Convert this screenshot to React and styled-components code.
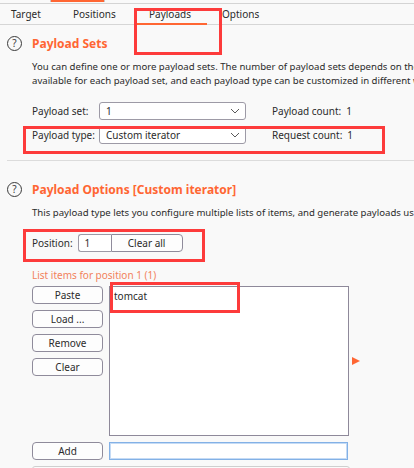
import React from "react";
import styled, { createGlobalStyle } from "styled-components";

const Global = createGlobalStyle`
  body {
    margin: 0;
    background: #f9f9f9;
    font-family: "Noto Sans", "Open Sans", sans-serif;
    color: #2b2b2b;
  }
`;

const Page = styled.div`
  position: relative;
  width: 414px;
  height: 468px;
  overflow: hidden;
  background: #f9f9f9;
  font-size: 10px;
`;

const TopStrip = styled.div`
  height: 3px;
  border-bottom: 1px solid #d4d4d4;
  display: flex;
`;

const PrevTab = styled.div`
  margin-left: 50px;
  width: 53px;
  height: 2px;
  background: #ff6633;
  border-left: 1px solid #c8c8c8;
  border-right: 1px solid #c8c8c8;
`;

const TabBar = styled.div`
  display: flex;
  height: 20px;
  border-bottom: 1px solid #d6d6d6;
`;

const Tab = styled.div`
  box-sizing: border-box;
  width: ${(p) => p.$w}px;
  padding-left: ${(p) => p.$pad}px;
  line-height: 20px;
  font-size: 10px;
  color: #2b2b2b;
  border-bottom: 2px solid ${(p) => (p.$active ? "#ff6633" : "transparent")};
  height: 21px;
`;

const Section = styled.div`
  padding-left: 7px;
  padding-top: ${(p) => p.$top}px;
`;

const Heading = styled.div`
  display: flex;
  align-items: center;
  height: 16px;
  gap: 10px;
`;

const Help = styled.span`
  box-sizing: border-box;
  width: 15px;
  height: 15px;
  border: 1.2px solid #3a3a3a;
  border-radius: 50%;
  display: flex;
  align-items: center;
  justify-content: center;
  font-size: 10px;
  color: #3a3a3a;
  line-height: 1;
`;

const Title = styled.div`
  color: #ff6633;
  font-weight: 700;
  font-size: 12px;
`;

const Desc = styled.div`
  margin-top: 9px;
  padding-left: 25px;
  line-height: 14px;
  white-space: nowrap;
  font-size: 9.6px;
`;

const FormGrid = styled.div`
  margin-top: 14px;
  padding-left: 25px;
  display: grid;
  grid-template-columns: 67px 147px auto;
  row-gap: 6px;
  align-items: center;
`;

const Label = styled.div`
  font-size: 10px;
  white-space: nowrap;
`;

const SelectBox = styled.div`
  box-sizing: border-box;
  height: 18px;
  border: 1px solid #9d9aa6;
  border-radius: 3px;
  background: #fff;
  display: flex;
  align-items: center;
  justify-content: space-between;
  padding: 0 5px 0 6px;
  font-size: 10px;
`;

const Count = styled.div`
  margin-left: 26px;
  font-size: 10px;
  white-space: nowrap;
  span {
    margin-left: 5px;
  }
`;

const Separator = styled.div`
  margin-top: 16px;
  margin-left: 7px;
  height: 1px;
  background: #dcdcdc;
`;

const PosRow = styled.div`
  margin-top: 14px;
  padding-left: 25px;
  display: flex;
  align-items: center;
`;

const PosInput = styled.div`
  box-sizing: border-box;
  margin-left: 5px;
  width: 33px;
  height: 18px;
  border: 1px solid #9d9aa6;
  border-right: none;
  border-radius: 3px 0 0 3px;
  background: #fff;
  padding-left: 6px;
  line-height: 16px;
`;

const Button = styled.div`
  box-sizing: border-box;
  width: ${(p) => p.$w || 71}px;
  height: 18px;
  border: 1px solid #8f8b9b;
  border-radius: ${(p) => (p.$joined ? "0 4px 4px 0" : "4px")};
  background: #fdfdfd;
  display: flex;
  align-items: center;
  justify-content: center;
  font-size: 10px;
  color: #2b2b2b;
`;

const ListLabel = styled.div`
  margin-top: 16px;
  padding-left: 25px;
  color: #f2825c;
  line-height: 14px;
  font-size: 10px;
`;

const ListRow = styled.div`
  margin-top: 4px;
  padding-left: 25px;
  display: flex;
  gap: 6px;
`;

const ButtonCol = styled.div`
  display: flex;
  flex-direction: column;
  gap: 6px;
`;

const ListBox = styled.div`
  box-sizing: border-box;
  width: 240px;
  height: 150px;
  border: 1px solid #8e899a;
  background: #fff;
  padding: 2px 4px;
  font-size: 10px;
  line-height: 14px;
`;

const Arrow = styled.div`
  margin-top: 71px;
  margin-left: -3px;
  width: 0;
  height: 0;
  border-top: 4.5px solid transparent;
  border-bottom: 4.5px solid transparent;
  border-left: 8px solid #ff6633;
`;

const AddRow = styled.div`
  margin-top: 6px;
  padding-left: 25px;
  display: flex;
  gap: 6px;
`;

const AddInput = styled.div`
  box-sizing: border-box;
  width: 239px;
  height: 18px;
  background: #fff;
  border: 1px solid #83b1e6;
  box-shadow: inset 0 0 0 1px #c5dbf5;
`;

const BottomBox = styled.div`
  margin: 6px 0 0 32px;
  width: 316px;
  height: 20px;
  border: 1px solid #cfcfcf;
  border-radius: 3px;
  background: #fbfbfb;
`;

const Mark = styled.div`
  position: absolute;
  box-sizing: border-box;
  left: ${(p) => p.$x}px;
  top: ${(p) => p.$y}px;
  width: ${(p) => p.$w}px;
  height: ${(p) => p.$h}px;
  border: 3px solid #fd3b3b;
  pointer-events: none;
`;

function Chevron() {
  return (
    <svg width="10" height="6" viewBox="0 0 10 6">
      <polyline points="1,1 5,5 9,1" fill="none" stroke="#5a5a5a" strokeWidth="1" />
    </svg>
  );
}

export default function App() {
  const tabs = [
    { name: "Target", w: 62, pad: 11 },
    { name: "Positions", w: 75, pad: 11 },
    { name: "Payloads", w: 70, pad: 12, active: true },
    { name: "Options", w: 80, pad: 15 },
  ];
  return (
    <Page>
      <Global />
      <TopStrip>
        <PrevTab />
      </TopStrip>
      <TabBar>
        {tabs.map((t) => (
          <Tab key={t.name} $w={t.w} $pad={t.pad} $active={t.active}>
            {t.name}
          </Tab>
        ))}
      </TabBar>

      <Section $top={10}>
        <Heading>
          <Help>?</Help>
          <Title>Payload Sets</Title>
        </Heading>
        <Desc>
          You can define one or more payload sets. The number of payload sets depends on the attack type defined in the Positions tab.
          <br />
          available for each payload set, and each payload type can be customized in different ways.
        </Desc>
        <FormGrid>
          <Label>Payload set:</Label>
          <SelectBox>
            1
            <Chevron />
          </SelectBox>
          <Count>
            Payload count:<span>1</span>
          </Count>
          <Label>Payload type:</Label>
          <SelectBox>
            Custom iterator
            <Chevron />
          </SelectBox>
          <Count>
            Request count:<span>1</span>
          </Count>
        </FormGrid>
      </Section>

      <Separator />

      <Section $top={20}>
        <Heading>
          <Help>?</Help>
          <Title>Payload Options [Custom iterator]</Title>
        </Heading>
        <Desc>
          This payload type lets you configure multiple lists of items, and generate payloads using all permutations of items in the lists.
        </Desc>
        <PosRow>
          <Label>Position:</Label>
          <PosInput>1</PosInput>
          <Button $w={72} $joined>
            Clear all
          </Button>
        </PosRow>
        <ListLabel>List items for position 1 (1)</ListLabel>
        <ListRow>
          <ButtonCol>
            <Button>Paste</Button>
            <Button>Load ...</Button>
            <Button>Remove</Button>
            <Button>Clear</Button>
          </ButtonCol>
          <ListBox>tomcat</ListBox>
          <Arrow />
        </ListRow>
        <AddRow>
          <Button>Add</Button>
          <AddInput />
        </AddRow>
      </Section>
      <BottomBox />

      <Mark $x={134} $y={8} $w={88} $h={47} />
      <Mark $x={23} $y={126} $w={362} $h={28} />
      <Mark $x={23} $y={229} $w={182} $h={33} />
      <Mark $x={110} $y={282} $w={130} $h={31} />
    </Page>
  );
}
